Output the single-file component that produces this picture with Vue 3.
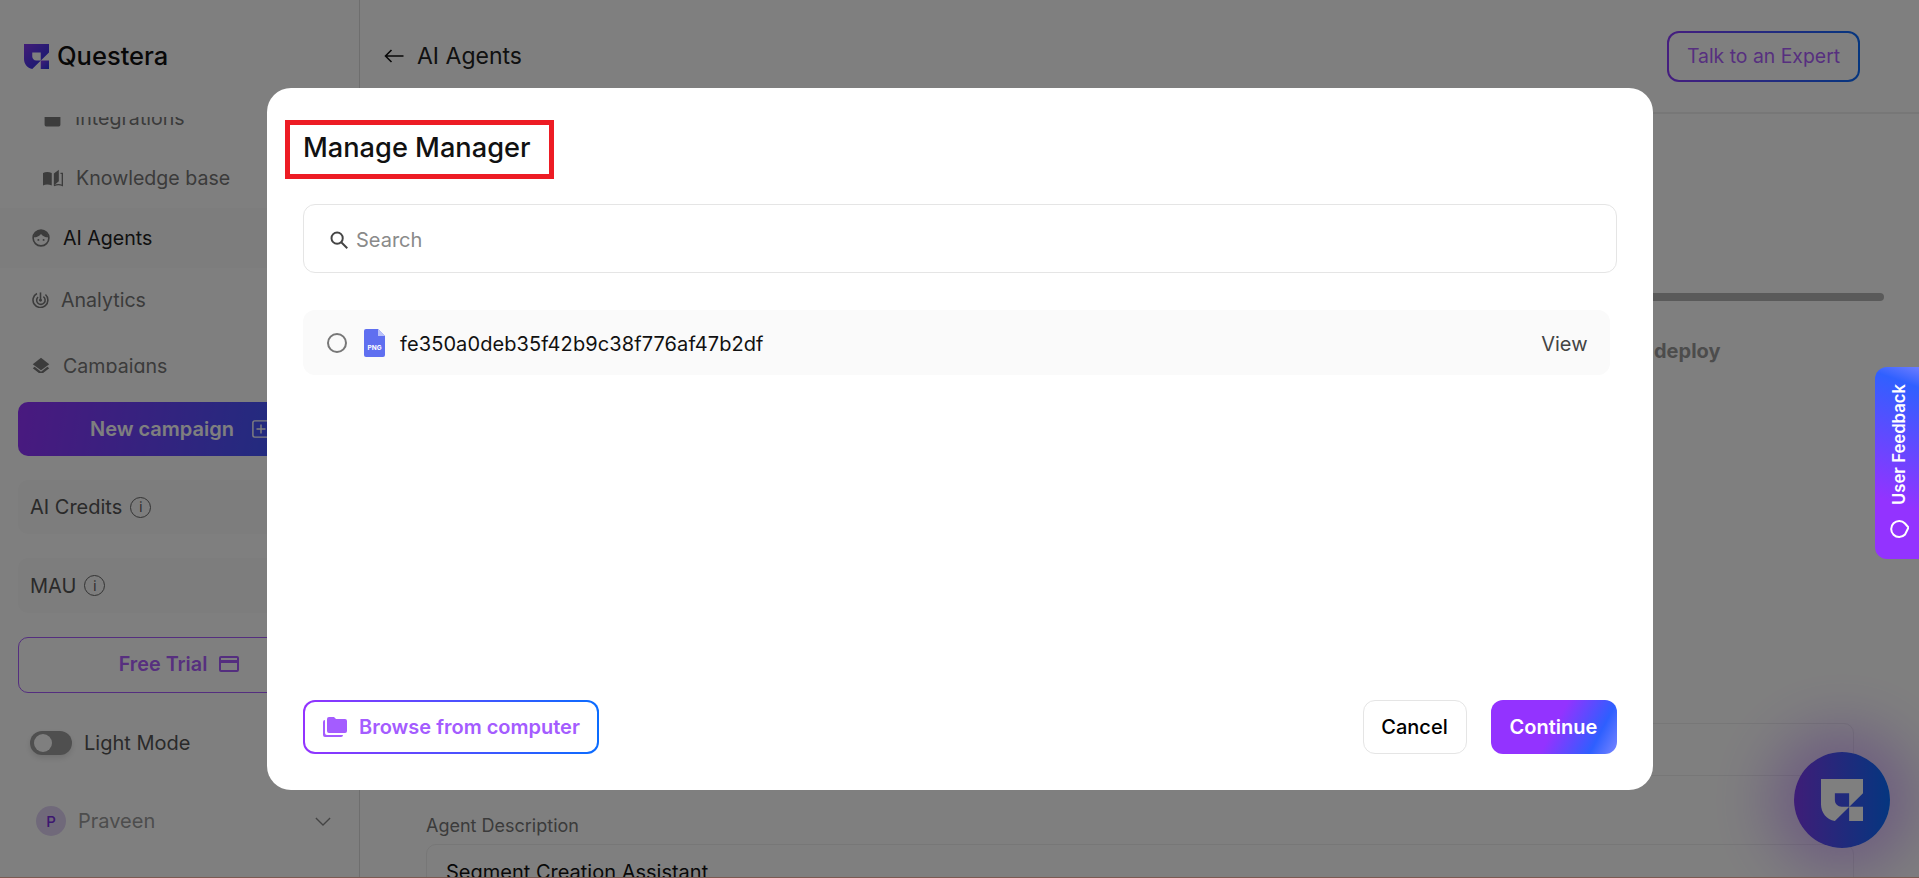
<script setup>
const feedback = 'User Feedback'
</script>

<template>
  <div class="page">
    <aside class="sidebar">
      <div class="brand">
        <svg class="brand-logo" viewBox="0 0 100 100">
          <defs><linearGradient id="lg" x1="0" y1="0" x2="1" y2="1"><stop offset="0" stop-color="#8438f0"/><stop offset="1" stop-color="#2233e0"/></linearGradient></defs>
          <path fill="url(#lg)" fill-rule="evenodd" d="M0 0H100V34L33 100C13 96 0 80 0 60ZM33 34V50C33 59 40 66 49 66H67V34Z"/><path fill="url(#lg)" d="M67 66H100V100H67Z"/>
        </svg>
        <span class="brand-name">Questera</span>
      </div>
      <div class="nav-clip">
        <div class="nav-list">
          <div class="nav sub nav-int">
            <svg class="ic-int" viewBox="0 0 24 24"><path fill="#787878" d="M2 5h3V3h4v2h6V3h4v2h3v15a2 2 0 0 1-2 2H4a2 2 0 0 1-2-2z"/></svg>
            <span>Integrations</span>
          </div>
          <div class="nav sub nav-kb">
            <svg class="ic-kb" viewBox="0 0 24 24"><path fill="#787878" d="M0 6c3-1.500 7-1.500 10.500 0v15C7 19.500 3 19.500 0 21z"/><path fill="#787878" d="M13 6.500L19 2v14l-6 5z"/><path fill="none" stroke="#787878" stroke-width="1.600" d="M21 6.500h2.200V21c-3-1.500-6.500-1.500-10 .2"/></svg>
            <span>Knowledge base</span>
          </div>
          <div class="nav active nav-ai">
            <svg class="ic" viewBox="0 0 24 24" fill="none" stroke="#787878" stroke-width="2.200"><circle cx="12" cy="12" r="10.500"/><path fill="#787878" stroke="none" d="M2.500 11c4 0 7-1.500 9.500-4.500 2.500 3 5.500 4.500 9.500 4.500C21 5.500 17 2 12 2S3 5.500 2.500 11z"/><circle cx="8.500" cy="14.500" r="1.300" fill="#787878" stroke="none"/><circle cx="15.500" cy="14.500" r="1.300" fill="#787878" stroke="none"/></svg>
            <span>AI Agents</span>
          </div>
          <div class="nav nav-an">
            <svg class="ic small" viewBox="0 0 24 24" fill="none" stroke="#787878" stroke-width="2.200"><path d="M7 3.500A10.500 10.500 0 1 0 19 5"/><path d="M8.500 8.500a6 6 0 1 0 7.500-.5"/><path d="M12 2v11.500"/><circle cx="12" cy="13" r="2" fill="#787878" stroke="none"/></svg>
            <span>Analytics</span>
          </div>
          <div class="nav nav-ca">
            <svg class="ic" viewBox="0 0 24 24"><path fill="#787878" d="M12 1l11 8.500-11 8-11-8z"/><path fill="#787878" d="M1 15l2.500-2 8.500 6.500 8.500-6.500 2.500 2-11 8.500z"/></svg>
            <span>Campaigns</span>
          </div>
        </div>
      </div>
      <div class="new-campaign">
        <span>New campaign</span>
        <svg class="plus" viewBox="0 0 20 20" fill="none" stroke="#fff" stroke-width="1.600"><rect x="1" y="1" width="18" height="18" rx="2"/><path d="M10 5v10M5 10h10"/></svg>
      </div>
      <div class="stat stat-a"><span>AI Credits</span><span class="info">i</span></div>
      <div class="stat stat-b"><span>MAU</span><span class="info">i</span></div>
      <div class="trial">
        <span>Free Trial</span>
        <svg class="card-ic" viewBox="0 0 20 16" fill="none" stroke="#a85cff" stroke-width="2"><rect x="1" y="1" width="18" height="14" rx="1"/><path d="M1 5.500h18" stroke-width="3"/></svg>
      </div>
      <div class="mode">
        <span class="toggle"><span class="knob"></span></span>
        <span>Light Mode</span>
      </div>
      <div class="user">
        <span class="avatar">P</span>
        <span class="user-name">Praveen</span>
        <svg class="chev" viewBox="0 0 18 10" fill="none" stroke="#888" stroke-width="1.500"><path d="M1 1l8 8 8-8"/></svg>
      </div>
    </aside>

    <main class="main">
      <header class="top">
        <div class="crumb">
          <svg class="arrow" viewBox="0 0 20 14" fill="none" stroke="#111" stroke-width="1.600"><path d="M19 7H1M7 1L1 7l6 6"/></svg>
          <span>AI Agents</span>
        </div>
        <div class="talk">Talk to an Expert</div>
      </header>
      <section class="content">
        <div class="progress"></div>
        <div class="deploy">deploy</div>
        <div class="field-empty"></div>
        <label class="field-label">Agent Description</label>
        <div class="field-box">Segment Creation Assistant</div>
      </section>
    </main>

    <div class="chat">
      <svg class="chat-logo" viewBox="0 0 100 100"><path fill="#fff" fill-rule="evenodd" d="M0 0H100V34L33 100C13 96 0 80 0 60ZM33 34V50C33 59 40 66 49 66H67V34Z"/><path fill="#fff" d="M67 66H100V100H67Z"/></svg>
    </div>

    <div class="overlay">
      <div class="modal">
        <h2 class="title">Manage Manager</h2>
        <div class="search">
          <svg class="search-ic" viewBox="0 0 24 24" fill="none" stroke="#444" stroke-width="2.600"><circle cx="9.500" cy="9.500" r="7.500"/><path d="M15 15l8 8"/></svg>
          <span>Search</span>
        </div>
        <div class="file-row">
          <span class="radio"></span>
          <svg class="file-ic" viewBox="0 0 21 28"><path fill="#5f6ff0" d="M2 0h12l7 7v19a2 2 0 0 1-2 2H2a2 2 0 0 1-2-2V2a2 2 0 0 1 2-2z"/><path fill="#b9c1fa" d="M14 0l7 7h-7z"/><text x="10.500" y="21" class="png">PNG</text></svg>
          <span class="file-name">fe350a0deb35f42b9c38f776af47b2df</span>
          <span class="view">View</span>
        </div>
        <div class="foot">
          <div class="browse">
            <svg class="folder" viewBox="0 0 24 20"><path fill="#a45cff" d="M4 2a2 2 0 0 1 2-2h5l2 2h9a2 2 0 0 1 2 2v10a2 2 0 0 1-2 2H6a2 2 0 0 1-2-2z"/><path fill="#a45cff" d="M0 5a2 2 0 0 1 2-2v13a2 2 0 0 0 2 2h16a2 2 0 0 1-2 2H2a2 2 0 0 1-2-2z"/></svg>
            <span>Browse from computer</span>
          </div>
          <div class="foot-right">
            <div class="cancel">Cancel</div>
            <div class="continue">Continue</div>
          </div>
        </div>
      </div>
    </div>

    <div class="feedback">
      <svg class="fb-ic" viewBox="0 0 20 20" fill="none" stroke="#fff" stroke-width="2" stroke-linejoin="round"><path d="M16 4.500A8 8 0 1 0 16 15.500L19.500 8.500z"/></svg>
      <span class="fb-text">{{ feedback }}</span>
    </div>
    <div class="strip"></div>
  </div>
</template>

<style>
html, body { margin: 0; height: 100%; overflow: hidden; background: #fff; }
</style>

<style scoped>
.page {
  position: relative; width: 1919px; height: 878px; overflow: hidden; display: flex; background: #fff;
  font-family: "Inter", "Noto Sans", sans-serif; color: #222; font-size: 20px;
}
.sidebar { width: 359px; flex: none; border-right: 1px solid #ddd; display: flex; flex-direction: column; box-sizing: content-box; }
.brand { height: 117px; display: flex; align-items: center; padding: 0 0 6px 24px; gap: 8px; flex: none; box-sizing: border-box; }
.brand-logo { width: 25px; height: 25px; margin-top: 1px; }
.brand-name { font-size: 25.500px; font-weight: 500; color: #111; }
.nav-clip { height: 256px; overflow: hidden; flex: none; }
.nav-list { margin-top: -29px; }
.nav { display: flex; align-items: center; color: #777; height: 60px; padding-left: 32px; gap: 13px; font-size: 19.600px; }
.nav.sub { padding-left: 43px; gap: 13px; }
.ic-int { width: 19px; height: 19px; }
.ic-kb { width: 20px; height: 20px; }
.ic { width: 18px; height: 18px; flex: none; }
.ic.small { width: 17px; height: 17px; }
.nav-an { gap: 12px; }
.active { color: #222; background: #fbfbfb; }
.nav-an { height: 63px; }
.nav-ca { height: 69px; }
.new-campaign {
  margin: 29px 0 0 18px; width: 324px; height: 54px; border-radius: 10px; flex: none;
  background: linear-gradient(100deg, #9333ff, #3060ff);
  color: #fff; font-weight: 600; display: flex; align-items: center; justify-content: center; gap: 18px;
}
.plus { width: 18px; height: 18px; }
.stat {
  margin: 24px 0 0 18px; width: 324px; height: 54px; background: #fafafa; border-radius: 10px; flex: none;
  display: flex; align-items: center; padding-left: 12px; gap: 8px; box-sizing: border-box; color: #555;
}
.stat-b { height: 55px; }
.info { width: 21px; height: 21px; border: 1.500px solid #666; border-radius: 50%; font-size: 13px; display: flex; align-items: center; justify-content: center; box-sizing: border-box; }
.trial {
  margin: 24px 0 0 18px; width: 324px; height: 56px; border: 1px solid #a85cff; border-radius: 10px; box-sizing: border-box; flex: none;
  color: #ae5fff; font-weight: 600; display: flex; align-items: center; justify-content: center; gap: 12px; padding: 0 2px 2px 0; font-size: 19.800px;
}
.card-ic { width: 20px; height: 16px; }
.mode { margin: 37px 0 0 30px; display: flex; align-items: center; gap: 12px; color: #555; height: 26px; flex: none; }
.toggle { width: 42px; height: 24px; border-radius: 12px; background: #9e9e9e; display: flex; align-items: center; padding-left: 4px; box-sizing: border-box; box-shadow: 0 3px 6px rgba(0, 0, 0, .12); }
.knob { width: 18px; height: 18px; border-radius: 50%; background: #fff; }
.user { margin: 50px 0 0 36px; display: flex; align-items: center; gap: 12px; flex: none; width: 295px; }
.avatar { width: 30px; height: 30px; border-radius: 50%; background: #e0d3f5; color: #7b2fe0; font-size: 15px; display: flex; align-items: center; justify-content: center; font-weight: 500; }
.user-name { flex: 1; color: #9a9a9a; }
.chev { width: 16px; height: 9px; }

.main { flex: 1; display: flex; flex-direction: column; min-width: 0; }
.top { height: 114px; flex: none; box-sizing: border-box; border-bottom: 2px solid #eee; display: flex; align-items: center; justify-content: space-between; padding: 0 59px 0 24px; }
.crumb { display: flex; align-items: center; gap: 12px; font-size: 23px; color: #222; }
.arrow { width: 21px; height: 14px; }
.talk { width: 193px; height: 51px; border: 2px solid transparent; border-radius: 12px; box-sizing: border-box;
  background: linear-gradient(#fff, #fff) padding-box, linear-gradient(90deg, #8b3bff, #0a6cff) border-box;
  color: #ae5fff; display: flex; align-items: center; justify-content: center; font-size: 19.400px; }
.content { flex: 1; display: flex; flex-direction: column; padding-left: 66px; padding-right: 65px; }
.progress { height: 8px; background: #b5b5b5; border-radius: 4px; margin: 179px -30px 0 0; }
.deploy { align-self: flex-start; margin: 36px 0 0 1228px; font-weight: 700; font-size: 20px; color: #999; line-height: 28px; }
.field-empty { height: 53px; border: 1px solid #eee; border-radius: 10px; margin-top: 358px; box-sizing: border-box; flex: none; }
.field-label { margin-top: 38px; color: #777; font-size: 18px; line-height: 24px; }
.field-box { margin-top: 6px; height: 80px; border: 1px solid #eee; border-radius: 10px; padding: 15px 19px; box-sizing: border-box; color: #111; flex: none; }

.chat { position: absolute; left: 1794px; top: 752px; width: 96px; height: 96px; border-radius: 50%;
  background: linear-gradient(90deg, #7d3bf0, #0a6cff); box-shadow: 0 0 60px 24px rgba(147, 51, 255, .35);
  display: flex; align-items: center; justify-content: center; }
.chat-logo { width: 42px; height: 42px; }

.overlay { position: absolute; inset: 0; background: rgba(0, 0, 0, .5); display: flex; align-items: center; justify-content: center; }
.modal { width: 1386px; height: 702px; background: #fff; border-radius: 24px; box-sizing: border-box; padding: 32px 36px 36px 36.500px; display: flex; flex-direction: column; }
.title { margin: 0 0 0 -18px; align-self: flex-start; height: 59px; box-sizing: border-box; border: 5px solid #ed1c24; padding: 0 19px 4px 13px; font-size: 27.200px; font-weight: 500; color: #111; display: flex; align-items: center; }
.search { margin-top: 25px; height: 69px; border: 1px solid #e5e5e5; border-radius: 12px; box-sizing: border-box; display: flex; align-items: center; padding: 2px 0 0 26px; gap: 8px; color: #8a8a8a; flex: none; }
.search-ic { width: 18px; height: 18px; }
.file-row { margin: 37px 7px 0 0; height: 65px; background: #fafafa; border-radius: 12px; display: flex; align-items: center; padding: 2px 22px 0 24px; box-sizing: border-box; flex: none; }
.radio { width: 20px; height: 20px; border: 2px solid #777; border-radius: 50%; box-sizing: border-box; margin-top: -2px; }
.file-ic { width: 21px; height: 28px; margin: -2px 0 0 17px; }
.png { font-size: 6.500px; font-weight: 700; fill: #fff; text-anchor: middle; }
.file-name { margin-left: 15px; flex: 1; color: #111; letter-spacing: .1px; }
.view { color: #444; }
.foot { margin-top: auto; display: flex; justify-content: space-between; align-items: center; }
.browse { width: 296px; height: 54px; border: 2px solid transparent; border-radius: 12px; box-sizing: border-box;
  background: linear-gradient(#fff, #fff) padding-box, linear-gradient(90deg, #9333ff, #0a6cff) border-box;
  color: #a45cff; font-weight: 600; display: flex; align-items: center; padding-left: 18px; gap: 12px; }
.folder { width: 24px; height: 20px; }
.foot-right { display: flex; gap: 24px; }
.cancel { width: 104px; height: 54px; border: 1px solid #e5e5e5; border-radius: 12px; box-sizing: border-box; display: flex; align-items: center; justify-content: center; font-weight: 500; color: #000; }
.continue { width: 126px; height: 54px; border-radius: 12px; background: linear-gradient(118deg, #9333ff 50%, #2e5fff 82%, #7a86ff); color: #fff; font-weight: 600; display: flex; align-items: center; justify-content: center; }

.feedback { position: absolute; right: 0; top: 367px; width: 44px; height: 192px; border-radius: 12px 0 0 12px;
  background: linear-gradient(200deg, #6d7dff 0, #3060ff 10%, #9333ff 70%);
  display: flex; flex-direction: column-reverse; align-items: center; box-sizing: border-box; padding: 0 0 20px 4px; gap: 14px; color: #fff; }
.fb-ic { width: 20px; height: 20px; flex: none; }
.fb-text { writing-mode: vertical-rl; transform: rotate(180deg); font-size: 16.700px; font-weight: 600; line-height: 1; white-space: nowrap; }
.strip { position: absolute; left: 0; right: 0; bottom: 0; height: 1px; background: #7a5a52; }
</style>
